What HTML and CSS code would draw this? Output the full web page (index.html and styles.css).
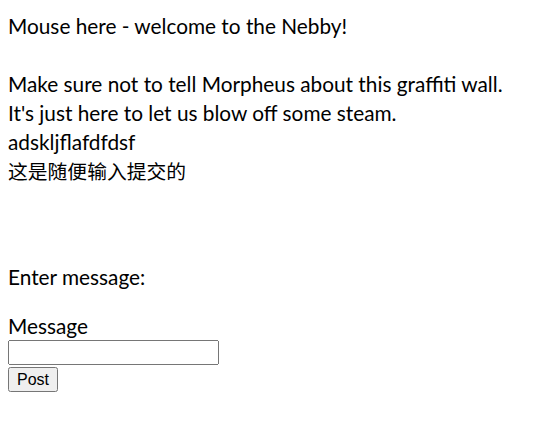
FILE: index.html
```html
<!DOCTYPE html>
<html>
<head>
<meta charset="utf-8">
<link rel="stylesheet" href="styles.css">
</head>
<body>
<div class="wall">Mouse here - welcome to the Nebby!<br><br>Make sure not to tell Morpheus about this graffiti wall.<br>It's just here to let us blow off some steam.<br>adskljflafdfdsf<br><span class="cjk">这是随便输入提交的</span></div>
<form class="post-form">
<div class="prompt">Enter message:</div>
<label class="label" for="msg">Message</label>
<input class="field" id="msg" type="text">
<button class="btn" type="button">Post</button>
</form>
</body>
</html>
```
FILE: styles.css
```css
body {
  margin: 8px;
  font-family: Lato, "Noto Sans CJK SC", sans-serif;
  font-size: 20.8px;
  line-height: 29px;
  color: #000;
  background: #fff;
}
.wall {
  margin-top: 3px;
}
.cjk {
  font-family: "Noto Sans CJK SC", sans-serif;
  font-size: 19.8px;
}
.post-form {
  margin-top: 77px;
  display: flex;
  flex-direction: column;
  align-items: flex-start;
}
.prompt {
  margin-bottom: 20px;
}
.label {
  display: block;
}
.field {
  width: 211px;
  height: 25px;
  box-sizing: border-box;
  margin: 0;
  font-size: 16px;
}
.btn {
  margin: 2px 0 0;
  height: 25px;
  font-family: "Liberation Sans", Arial, sans-serif;
  font-size: 16px;
  line-height: normal;
  padding: 1px 7px;
}
```
